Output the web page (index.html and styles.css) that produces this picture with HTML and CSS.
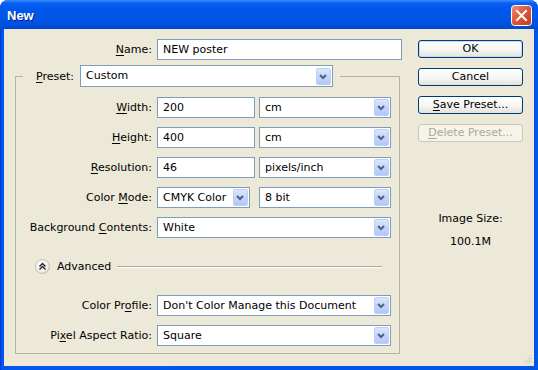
FILE: index.html
```html
<!DOCTYPE html>
<html lang="en">
<head>
    <meta charset="UTF-8">
    <title>New</title>
    <link rel="stylesheet" href="styles.css">
</head>
<body>

    <div class="window">

        <!-- title bar -->
        <div class="titlebar">
            <span class="title">New</span>
            <span class="close">
                <svg width="21" height="21" viewBox="0 0 21 21">
                    <defs>
                        <linearGradient id="cg" x1="0" y1="0" x2="1" y2="1">
                            <stop offset="0" stop-color="#f0917a"/>
                            <stop offset="0.45" stop-color="#e0583a"/>
                            <stop offset="1" stop-color="#c23b1d"/>
                        </linearGradient>
                    </defs>
                    <rect x="0.5" y="0.5" width="20" height="20" rx="3" fill="url(#cg)" stroke="#fff"/>
                    <path d="M6 6 L15 15 M15 6 L6 15" stroke="#fff" stroke-width="2" stroke-linecap="square"/>
                </svg>
            </span>
        </div>

        <div class="client">

            <!-- left: form -->
            <div class="form">
                <div class="nameRow">
                    <label class="lbl"><u>N</u>ame:</label>
                    <div class="field text">NEW poster</div>
                </div>

                <fieldset class="group">
                    <legend class="preset">
                        <span class="lbl"><u>P</u>reset:</span>
                        <div class="field combo presetCombo"><span class="val">Custom</span><i class="arrow"></i></div>
                    </legend>

                    <div class="grid">
                        <label class="lbl"><u>W</u>idth:</label>
                        <div class="pair">
                            <div class="field text num">200</div>
                            <div class="field combo unit"><span class="val">cm</span><i class="arrow"></i></div>
                        </div>

                        <label class="lbl"><u>H</u>eight:</label>
                        <div class="pair">
                            <div class="field text num">400</div>
                            <div class="field combo unit"><span class="val">cm</span><i class="arrow"></i></div>
                        </div>

                        <label class="lbl"><u>R</u>esolution:</label>
                        <div class="pair">
                            <div class="field text num">46</div>
                            <div class="field combo unit"><span class="val">pixels/inch</span><i class="arrow"></i></div>
                        </div>

                        <label class="lbl">Color <u>M</u>ode:</label>
                        <div class="pair mode">
                            <div class="field combo modeCombo"><span class="val">CMYK Color</span><i class="arrow"></i></div>
                            <div class="field combo unit"><span class="val">8 bit</span><i class="arrow"></i></div>
                        </div>

                        <label class="lbl">Background <u>C</u>ontents:</label>
                        <div class="field combo"><span class="val">White</span><i class="arrow"></i></div>

                        <!-- advanced -->
                        <div class="advanced">
                            <span class="advIcon">
                                <svg width="15" height="15" viewBox="0 0 15 15">
                                    <defs>
                                        <radialGradient id="ag" cx="0.4" cy="0.35" r="0.7">
                                            <stop offset="0" stop-color="#ffffff"/>
                                            <stop offset="0.7" stop-color="#f1f0ea"/>
                                            <stop offset="1" stop-color="#d6d3c6"/>
                                        </radialGradient>
                                    </defs>
                                    <circle cx="7.5" cy="7.5" r="7" fill="url(#ag)" stroke="#c3c0b2"/>
                                    <path d="M4.5 7.5 L7.5 4.5 L10.5 7.5 M4.5 10.5 L7.5 7.5 L10.5 10.5" fill="none" stroke="#222" stroke-width="1.4"/>
                                </svg>
                            </span>
                            <span class="advText">Advanced</span>
                            <span class="advLine"></span>
                        </div>

                        <label class="lbl">Color Pr<u>o</u>file:</label>
                        <div class="field combo"><span class="val">Don't Color Manage this Document</span><i class="arrow"></i></div>

                        <label class="lbl">Pi<u>x</u>el Aspect Ratio:</label>
                        <div class="field combo"><span class="val">Square</span><i class="arrow"></i></div>
                    </div>
                </fieldset>
            </div>

            <!-- right: buttons -->
            <div class="side">
                <button class="btn default">OK</button>
                <button class="btn">Cancel</button>
                <button class="btn"><u>S</u>ave Preset...</button>
                <button class="btn disabled"><u>D</u>elete Preset...</button>

                <div class="info">
                    <div>Image Size:</div>
                    <div>100.1M</div>
                </div>
            </div>

            <span class="grip"></span>
        </div>
    </div>

</body>
</html>
```

FILE: styles.css
```css
body{
    margin: 0;
    background: #ffffff;
    font-family: "DejaVu Sans", sans-serif;
    font-size: 11px;
    color: #000;
}

u{
    text-decoration: underline;
    text-underline-offset: 2px;
}

.window{
    width: 538px;
    height: 370px;
    box-sizing: border-box;
    display: flex;
    flex-direction: column;
    border-radius: 8px 8px 0 0;
    overflow: hidden;
    background: linear-gradient(90deg, #0831d9 0, #0058ee 2px, #0055e5 100%);
}

/* title bar */
.titlebar{
    height: 29px;
    flex: none;
    display: flex;
    align-items: center;
    justify-content: space-between;
    padding: 0 6px 0 7px;
    background: linear-gradient(#3d8cff 0, #0a62f2 3px, #0058ee 7px, #0056e8 18px, #0050dc 25px, #0046cf 29px);
}

.title{
    font-family: "Liberation Sans", sans-serif;
    font-weight: bold;
    font-size: 13px;
    color: #fff;
    text-shadow: 1px 1px 0 #0a1a8a;
    padding-top: 1px;
}

.close{
    width: 21px;
    height: 21px;
    display: block;
    margin-top: 2px;
}

.close svg{
    display: block;
}

.client{
    flex: 1;
    margin: 0 4px 4px;
    background: #ece9d8;
    display: flex;
    padding: 10px 11px 0;
    position: relative;
}

/* form */
.form{
    width: 387px;
}

.nameRow{
    display: grid;
    grid-template-columns: 137px 245px;
    column-gap: 5px;
    height: 21px;
}

.lbl{
    text-align: right;
    line-height: 21px;
    white-space: nowrap;
}

.field{
    height: 21px;
    box-sizing: border-box;
    border: 1px solid #7f9db9;
    background: #fff;
    line-height: 19px;
    padding-left: 5px;
    white-space: nowrap;
    overflow: hidden;
}

.combo{
    display: flex;
    align-items: center;
    padding-right: 1px;
}

.combo .val{
    flex: 1;
}

.arrow{
    width: 15px;
    height: 17px;
    box-sizing: border-box;
    border: 1px solid #bccff8;
    border-radius: 2px;
    background-color: #c4d5fb;
    background-image: url("data:image/svg+xml,%3Csvg xmlns='http://www.w3.org/2000/svg' width='15' height='17'%3E%3Cpath d='M4 7 L7 10 L10 7' fill='none' stroke='%234d6185' stroke-width='2'/%3E%3C/svg%3E"), linear-gradient(#dbe6fe, #c0d2fa 60%, #b2c8f6);
    background-position: -1px -1px, 0 0;
    background-repeat: no-repeat;
}

.group{
    width: 385px;
    box-sizing: border-box;
    margin: 5px 0 0;
    padding: 4px 8px 7px 0;
    border: 1px solid #b5b2a1;
    min-width: 0;
}

.preset{
    margin-left: 7px;
    margin-bottom: 6px;
    padding: 0 7px 0 13px;
    display: flex;
    align-items: center;
    gap: 6px;
}

.presetCombo{
    width: 253px;
    height: 22px;
    line-height: 20px;
}

.grid{
    display: grid;
    grid-template-columns: 136px 234px;
    column-gap: 5px;
    row-gap: 9px;
}

.pair{
    display: flex;
    gap: 4px;
}

.num{
    width: 98px;
}

.unit{
    width: 132px;
}

.pair.mode{
    gap: 9px;
}

.modeCombo{
    width: 93px;
}

/* advanced */
.advanced{
    grid-column: 1 / -1;
    display: flex;
    align-items: center;
    height: 21px;
    margin: 9px 9px 9px 19px;
}

.advIcon{
    width: 15px;
    height: 15px;
}

.advIcon svg{
    display: block;
}

.advText{
    margin-left: 7px;
}

.advLine{
    flex: 1;
    margin-left: 6px;
    height: 0;
    border-top: 1px solid #aca899;
    border-bottom: 1px solid #fff;
}

/* buttons */
.side{
    width: 105px;
    margin-left: 16px;
    display: flex;
    flex-direction: column;
    gap: 10px;
    padding-top: 1px;
}

.btn{
    height: 18px;
    box-sizing: border-box;
    border: 1px solid #003c74;
    border-radius: 3px;
    background: linear-gradient(#ffffff, #f4f4f0 60%, #e3e2da);
    font-family: inherit;
    font-size: 11px;
    color: #000;
    padding: 0;
    line-height: 16px;
}

.btn.default{
    box-shadow: inset 0 0 0 1px #c5d8fa;
}

.btn.disabled{
    border-color: #c9c7ba;
    color: #aca899;
    background: #f5f4ea;
}

.info{
    margin-top: 55px;
    text-align: center;
    line-height: 23px;
}

.grip{
    position: absolute;
    right: 2px;
    bottom: 2px;
    width: 10px;
    height: 10px;
    background-image: radial-gradient(circle, #d6d3c3 1px, transparent 1.2px);
    background-size: 3px 3px;
    clip-path: polygon(100% 0, 100% 100%, 0 100%);
}
```
